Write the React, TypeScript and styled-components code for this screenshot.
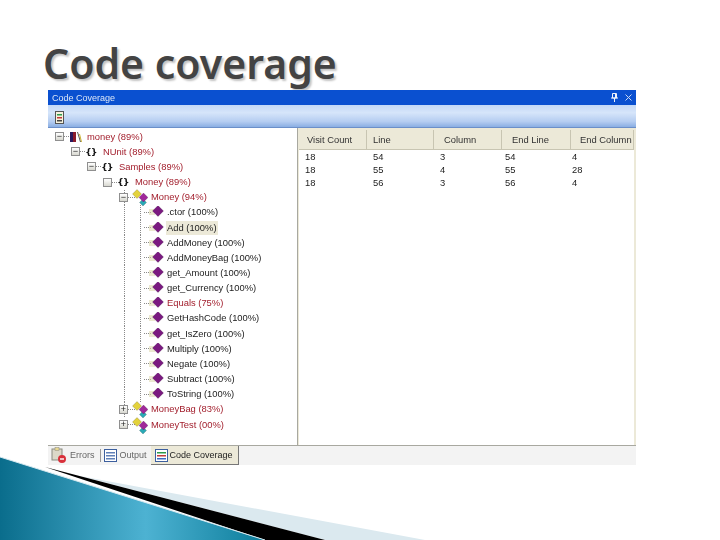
import styled, { createGlobalStyle } from "styled-components";
import React from "react";

const GlobalStyle = createGlobalStyle`
  html, body {
    margin: 0;
    padding: 0;
    background: #fff;
  }
`;

type TreeIcon = "book" | "braces" | "klass" | "method";
type TreeRow = {
  label: string;
  level: number;
  icon: TreeIcon;
  box?: "minus" | "plus" | "empty";
  red?: boolean;
  selected?: boolean;
  guides?: number[];
};

const leafGuides = [124, 140];

const rows: TreeRow[] = [
  { label: "money (89%)", level: 0, icon: "book", box: "minus", red: true },
  { label: "NUnit (89%)", level: 1, icon: "braces", box: "minus", red: true },
  { label: "Samples (89%)", level: 2, icon: "braces", box: "minus", red: true },
  { label: "Money (89%)", level: 3, icon: "braces", box: "empty", red: true },
  { label: "Money (94%)", level: 4, icon: "klass", box: "minus", red: true, guides: [124] },
  { label: ".ctor (100%)", level: 5, icon: "method", guides: leafGuides },
  { label: "Add (100%)", level: 5, icon: "method", selected: true, guides: leafGuides },
  { label: "AddMoney (100%)", level: 5, icon: "method", guides: leafGuides },
  { label: "AddMoneyBag (100%)", level: 5, icon: "method", guides: leafGuides },
  { label: "get_Amount (100%)", level: 5, icon: "method", guides: leafGuides },
  { label: "get_Currency (100%)", level: 5, icon: "method", guides: leafGuides },
  { label: "Equals (75%)", level: 5, icon: "method", red: true, guides: leafGuides },
  { label: "GetHashCode (100%)", level: 5, icon: "method", guides: leafGuides },
  { label: "get_IsZero (100%)", level: 5, icon: "method", guides: leafGuides },
  { label: "Multiply (100%)", level: 5, icon: "method", guides: leafGuides },
  { label: "Negate (100%)", level: 5, icon: "method", guides: leafGuides },
  { label: "Subtract (100%)", level: 5, icon: "method", guides: leafGuides },
  { label: "ToString (100%)", level: 5, icon: "method", guides: leafGuides },
  { label: "MoneyBag (83%)", level: 4, icon: "klass", box: "plus", red: true, guides: [124] },
  { label: "MoneyTest (00%)", level: 4, icon: "klass", box: "plus", red: true },
];

const columns = [
  { name: "Visit Count", pad: 8 },
  { name: "Line", pad: 6 },
  { name: "Column", pad: 10 },
  { name: "End Line", pad: 10 },
  { name: "End Column", pad: 9 },
];
const hits = [
  ["18", "54", "3", "54", "4"],
  ["18", "55", "4", "55", "28"],
  ["18", "56", "3", "56", "4"],
];

const Diamond = ({ x, y, r, fill }: { x: number; y: number; r: number; fill: string }) => (
  <polygon points={`${x},${y - r} ${x + r},${y} ${x},${y + r} ${x - r},${y}`} fill={fill} stroke="#00000055" strokeWidth="0.5" />
);

const NodeIcon = ({ kind }: { kind: TreeIcon }) => {
  if (kind === "book") {
    return (
      <svg width="16" height="12" viewBox="0 0 16 12">
        <rect x="2" y="1" width="3" height="10" fill="#2a1a5e" />
        <rect x="5" y="1" width="3" height="10" fill="#8c1c2c" />
        <path d="M9 1l1 0 3 10-1 0z" fill="#555" />
        <path d="M11 3l1 0 2 8-1 0z" fill="#c9b030" />
      </svg>
    );
  }
  if (kind === "klass") {
    return (
      <svg width="16" height="18" viewBox="0 0 16 18">
        <Diamond x={11} y={14.5} r={3.5} fill="#2aa9b5" />
        <Diamond x={5} y={6} r={4.5} fill="#e3d23c" />
        <Diamond x={11.5} y={9.5} r={4.5} fill="#a0289a" />
      </svg>
    );
  }
  return (
    <svg width="17" height="12" viewBox="0 0 17 12">
      <path d="M1 4h6M1 6h6M1 8h6" stroke="#d8d2a0" strokeWidth="1" />
      <Diamond x={10} y={5} r={5.5} fill="#7a1a80" />
    </svg>
  );
};

const Slide = styled.div`
  position: relative;
  width: 720px;
  height: 540px;
  overflow: hidden;
  background: #fff;
`;

const Heading = styled.h1`
  margin: 0;
  padding: 36px 0 0 43px;
  height: 90px;
  box-sizing: border-box;
  color: #434343;
  font-family: "Noto Sans", sans-serif;
  font-size: 41px;
  font-weight: 600;
  line-height: 54px;
  white-space: nowrap;
  text-shadow: 2px 2px 2px #c4c4c4;
`;

const Panel = styled.div`
  display: flex;
  flex-direction: column;
  width: 588px;
  height: 375px;
  margin-left: 48px;
  font-family: "Liberation Sans", sans-serif;
  font-size: 9.4px;
  background: #f3f3f3;
  filter: blur(0.3px);
`;

const TitleBar = styled.div`
  display: flex;
  align-items: center;
  justify-content: space-between;
  height: 15px;
  padding: 0 4px;
  background: #0a50d0;
  color: #dbe6f7;
  font-size: 9px;
`;

const TitleButtons = styled.div`
  display: flex;
  gap: 7px;
  align-items: center;
`;

const ToolBar = styled.div`
  display: flex;
  align-items: center;
  height: 23px;
  padding: 3px 0 0 7px;
  box-sizing: border-box;
  background: linear-gradient(#c3d8f6 0%, #d6e5fa 35%, #b5cdf1 75%, #8aaee3 100%);
  border-bottom: 1px solid #6b8fc9;
`;

const Panes = styled.div`
  flex: 1;
  display: flex;
  min-height: 0;
  background: #ece9d8;
`;

const TreePane = styled.div`
  flex: none;
  width: 250px;
  padding-top: 1px;
  background: #fff;
  border-right: 1px solid #a8a8a0;
  box-sizing: border-box;
`;

const Row = styled.div<{ $level: number; $guides: number[] }>`
  display: flex;
  align-items: center;
  height: 15.16px;
  padding-left: ${(p) => 7 + p.$level * 16}px;
  background-image: ${(p) =>
    p.$guides.length
      ? p.$guides.map(() => "repeating-linear-gradient(#8a8a8a 0 1px, transparent 1px 2px)").join(",")
      : "none"};
  background-size: 1px 100%;
  background-repeat: no-repeat;
  background-position: ${(p) => p.$guides.map((x) => `${x - 48}px 0`).join(",") || "0 0"};
`;

const BoxSlot = styled.div`
  width: 9px;
  height: 9px;
  flex: none;
`;

const ExpandBox = styled.div`
  display: flex;
  align-items: center;
  justify-content: center;
  width: 9px;
  height: 9px;
  box-sizing: border-box;
  border: 1px solid #8f8f8f;
  background: linear-gradient(#fff, #d8d8d0);
  color: #222;
  font-size: 9px;
  line-height: 7px;
`;

const IconSlot = styled.div<{ $leaf: boolean }>`
  display: flex;
  align-items: center;
  justify-content: flex-end;
  width: 22px;
  height: 100%;
  flex: none;
  padding-right: ${(p) => (p.$leaf ? 1 : 2)}px;
  box-sizing: border-box;
  background: repeating-linear-gradient(90deg, #8a8a8a 0 1px, transparent 1px 2px) 0 50% / 7px 1px no-repeat;
`;

const Braces = styled.span`
  padding-right: 3px;
  background: #fff;
  color: #111;
  font-family: "DejaVu Sans", sans-serif;
  font-size: 9px;
  font-weight: 700;
  letter-spacing: -0.5px;
`;

const NodeLabel = styled.span<{ $red?: boolean; $selected?: boolean }>`
  padding: 0 1px;
  color: ${(p) => (p.$red ? "#a3202e" : "#222")};
  background: ${(p) => (p.$selected ? "#ece9d8" : "transparent")};
  white-space: nowrap;
  line-height: 14px;
`;

const GridPane = styled.div`
  flex: 1;
  min-width: 0;
  margin: 2px 2px 0 1px;
  background: #fff;
  display: flex;
  flex-direction: column;
`;

const HeaderRow = styled.div`
  display: grid;
  grid-template-columns: 68px 67px 68px 69px 1fr;
`;

const HitRow = styled.div`
  display: grid;
  grid-template-columns: 68px 67px 65px 67px 1fr;
`;

const HeaderCell = styled.div<{ $pad: number }>`
  height: 19px;
  line-height: 19px;
  padding-left: ${(p) => p.$pad}px;
  background: #ece9d8;
  box-shadow: inset -1px 0 0 #c8c5b2;
  border-bottom: 1px solid #c8c5b2;
  color: #333;
  white-space: nowrap;
  overflow: hidden;
`;

const BodyCell = styled.div`
  height: 13px;
  line-height: 13px;
  padding-left: 6px;
  color: #222;
`;

const TabStrip = styled.div`
  display: flex;
  align-items: flex-start;
  height: 20px;
  padding-left: 3px;
  background: #f3f3f3;
  border-top: 1px solid #a8a8a0;
  box-sizing: border-box;
  font-size: 9px;
`;

const Tab = styled.div<{ $active?: boolean }>`
  display: flex;
  align-items: center;
  gap: ${(p) => (p.$active ? 2 : 3)}px;
  height: 19px;
  padding: 0 ${(p) => (p.$active ? 5 : 2)}px 0 ${(p) => (p.$active ? 4 : 0)}px;
  margin-left: ${(p) => (p.$active ? 1 : 0)}px;
  box-sizing: border-box;
  color: ${(p) => (p.$active ? "#222" : "#666")};
  background: ${(p) => (p.$active ? "#ece9d8" : "transparent")};
  border-right: 1px solid ${(p) => (p.$active ? "#777" : "transparent")};
  border-bottom: 1px solid ${(p) => (p.$active ? "#777" : "transparent")};
`;

const TabDivider = styled.div`
  width: 1px;
  height: 13px;
  margin: 3px 3px 0 2px;
  background: #9a9a9a;
`;

const Wedge = styled.svg`
  position: absolute;
  left: 0;
  bottom: 0;
`;

const ListIcon = ({ coloured }: { coloured?: boolean }) => (
  <svg width="13" height="13" viewBox="0 0 13 13">
    <rect x="0.5" y="0.5" width="12" height="12" fill="#fff" stroke="#3c5f9e" />
    <rect x="2" y="3" width="9" height="1.5" fill={coloured ? "#2e9a4a" : "#5f80b8"} />
    <rect x="2" y="6" width="9" height="1.5" fill={coloured ? "#c23a3a" : "#5f80b8"} />
    <rect x="2" y="9" width="9" height="1.5" fill={coloured ? "#3a6ac2" : "#5f80b8"} />
  </svg>
);

const ErrorsIcon = () => (
  <svg width="16" height="16" viewBox="0 0 16 16">
    <rect x="1" y="2" width="10" height="11" fill="#dcd8c8" stroke="#8a8a80" />
    <rect x="4" y="0.5" width="4" height="3" fill="#e8d890" stroke="#8a8a80" strokeWidth="0.5" />
    <circle cx="11" cy="12" r="4" fill="#d8303a" />
    <rect x="9" y="11.3" width="4" height="1.4" fill="#fff" />
  </svg>
);

const DocIcon = () => (
  <svg width="9" height="13" viewBox="0 0 9 13">
    <rect x="0.5" y="0.5" width="8" height="12" fill="#f6f2dc" stroke="#555" />
    <rect x="2" y="3" width="5" height="1.5" fill="#2e9a4a" />
    <rect x="2" y="6" width="5" height="1.5" fill="#c23a3a" />
    <rect x="2" y="9" width="5" height="1.5" fill="#444" />
  </svg>
);

const App: React.FC = () => {
  return (
    <Slide>
      <GlobalStyle />
      <Heading>Code coverage</Heading>
      <Panel>
        <TitleBar>
          <span>Code Coverage</span>
          <TitleButtons>
            <svg width="7" height="9" viewBox="0 0 7 9">
              <path d="M1.5 0.5h4v4.5h-4zM0 5h7M3.5 5v4M4.5 1v4" stroke="#eef3fb" fill="none" />
            </svg>
            <svg width="7" height="7" viewBox="0 0 7 7">
              <path d="M0.5 0.5l6 6M6.5 0.5l-6 6" stroke="#c9d8f2" fill="none" />
            </svg>
          </TitleButtons>
        </TitleBar>
        <ToolBar>
          <DocIcon />
        </ToolBar>
        <Panes>
          <TreePane>
            {rows.map((row) => (
              <Row key={row.label} $level={row.level} $guides={row.guides ?? []}>
                <BoxSlot>
                  {row.box && (
                    <ExpandBox>{row.box === "minus" ? "−" : row.box === "plus" ? "+" : ""}</ExpandBox>
                  )}
                </BoxSlot>
                <IconSlot $leaf={row.icon === "method"}>
                  {row.icon === "braces" ? <Braces>{"{}"}</Braces> : <NodeIcon kind={row.icon} />}
                </IconSlot>
                <NodeLabel $red={row.red} $selected={row.selected}>
                  {row.label}
                </NodeLabel>
              </Row>
            ))}
          </TreePane>
          <GridPane>
            <HeaderRow>
              {columns.map((c) => (
                <HeaderCell key={c.name} $pad={c.pad}>
                  {c.name}
                </HeaderCell>
              ))}
            </HeaderRow>
            {hits.map((hit) => (
              <HitRow key={hit[1]}>
                {hit.map((value, i) => (
                  <BodyCell key={i}>{value}</BodyCell>
                ))}
              </HitRow>
            ))}
          </GridPane>
        </Panes>
        <TabStrip>
          <Tab>
            <ErrorsIcon />
            Errors
          </Tab>
          <TabDivider />
          <Tab>
            <ListIcon />
            Output
          </Tab>
          <Tab $active>
            <ListIcon coloured />
            Code Coverage
          </Tab>
        </TabStrip>
      </Panel>
      <Wedge width="430" height="85" viewBox="0 455 430 85">
        <defs>
          <linearGradient id="teal" x1="0" y1="0" x2="1" y2="0">
            <stop offset="0" stopColor="#0a6d8c" />
            <stop offset="0.55" stopColor="#4db2d2" />
            <stop offset="1" stopColor="#0c7d9b" />
          </linearGradient>
        </defs>
        <polygon points="80,476 425,540 325,540" fill="#dbe9ef" />
        <polygon points="45,467 325,540 265,540" fill="#000" />
        <polygon points="0,457 265,540 0,540" fill="url(#teal)" />
        <line x1="0" y1="457" x2="265" y2="540" stroke="#d5e8ef" strokeWidth="1" />
      </Wedge>
    </Slide>
  );
};

export default App;
